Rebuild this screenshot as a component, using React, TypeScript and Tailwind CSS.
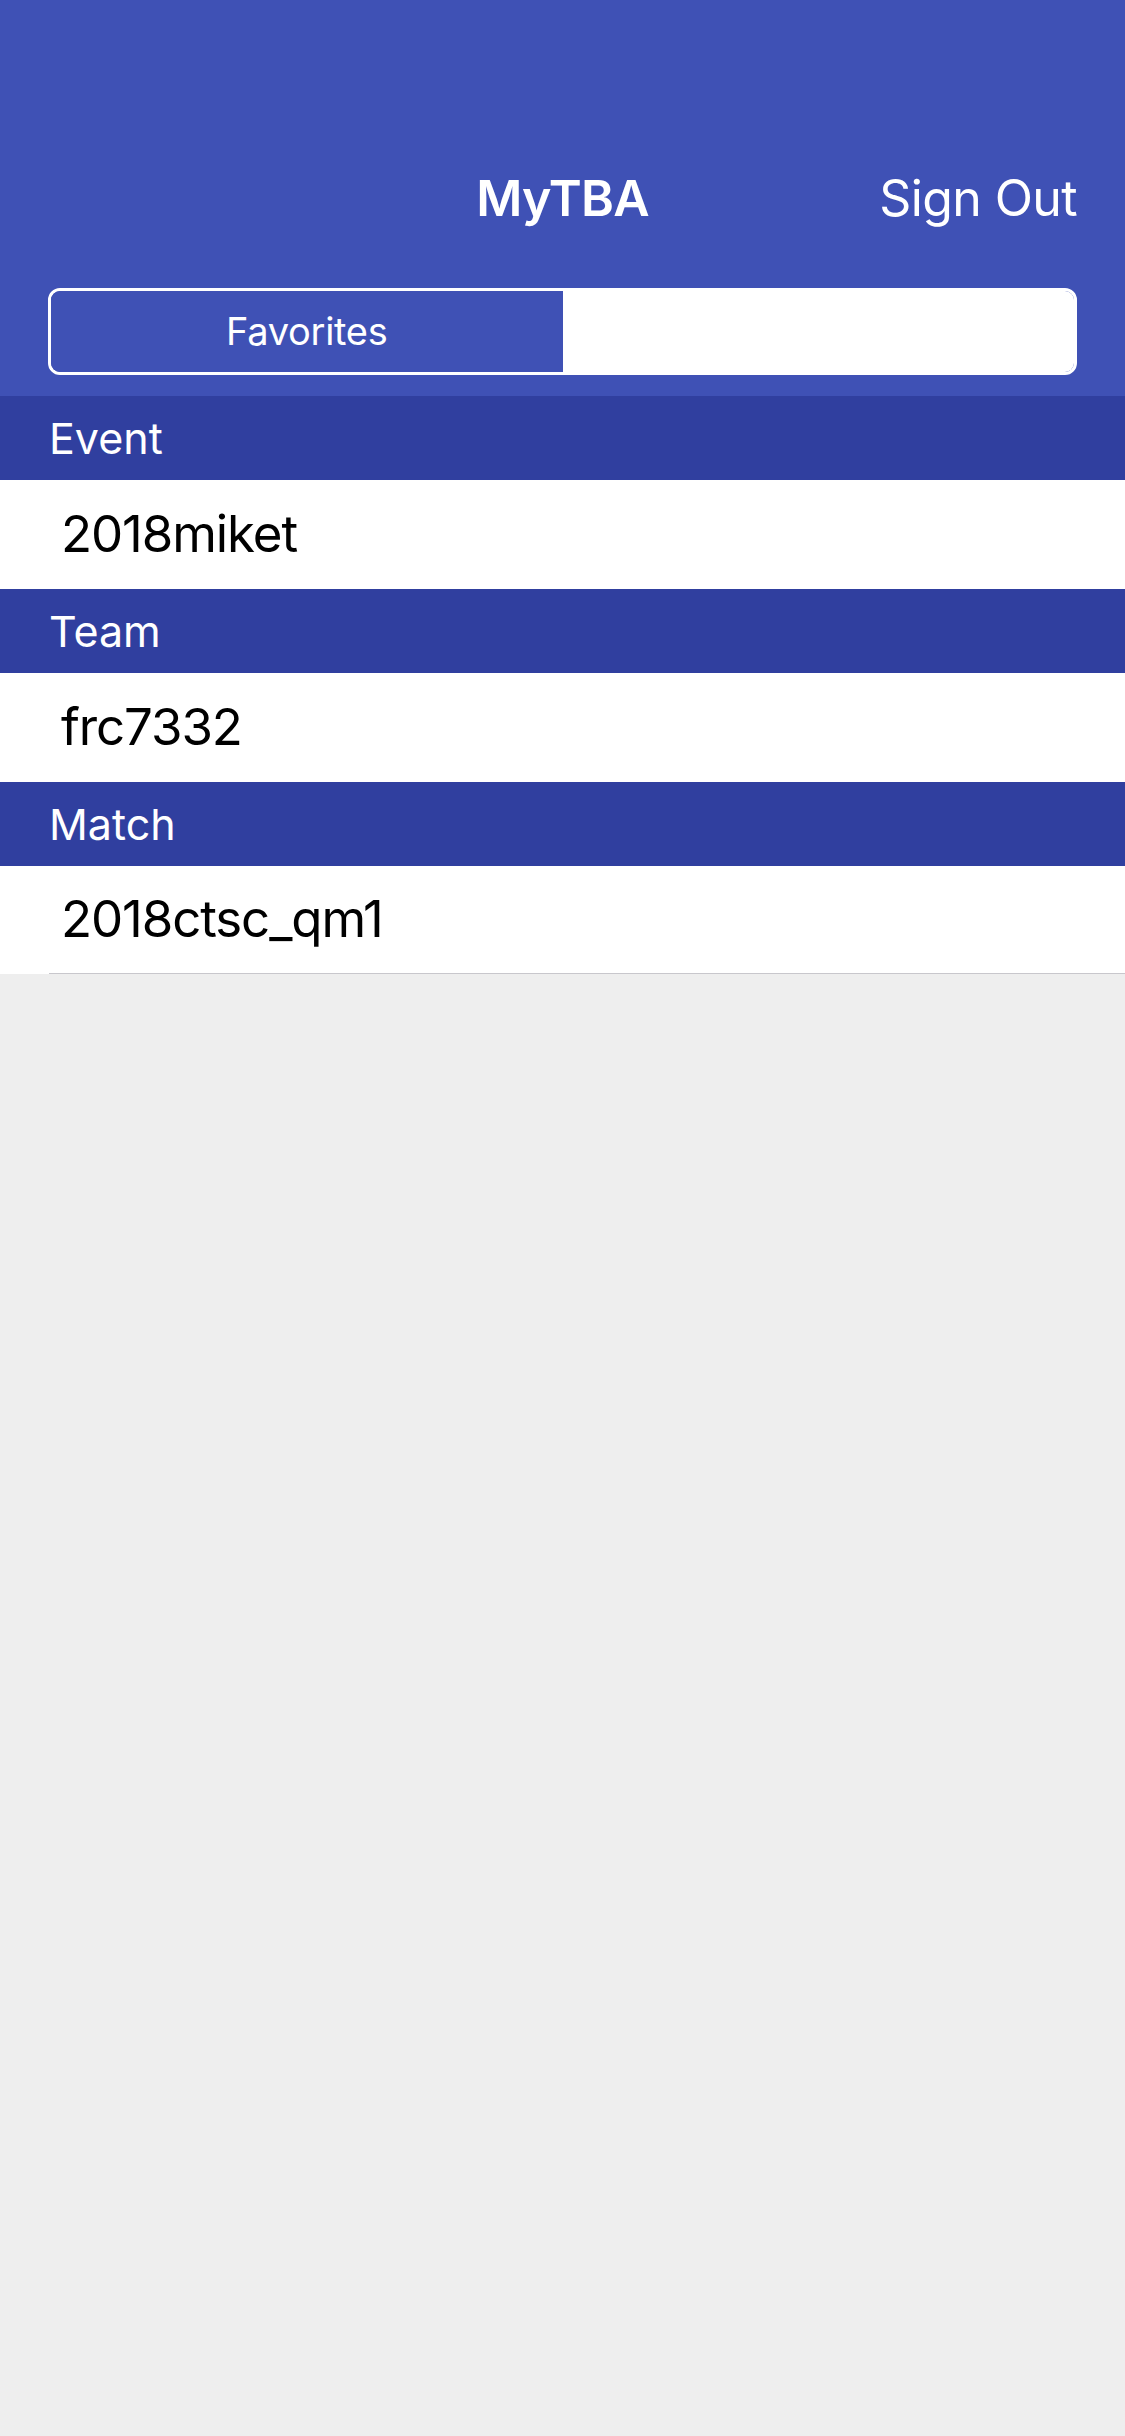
const sections = [
    {title: 'Event', items: ['2018miket']},
    {title: 'Team', items: ['frc7332']},
    {title: 'Match', items: ['2018ctsc_qm1']},
];

export default function App() {
    return (
        <div className="flex min-h-[2436px] w-[1125px] flex-col bg-[#eeeeee] font-['Inter','Liberation_Sans',sans-serif] antialiased">
            <header className="flex flex-col bg-[#3f51b5] pt-[132px]">
                <div className="relative flex h-[132px] items-center justify-center">
                    <span className="text-[50px] font-semibold tracking-[-0.8px] text-white">
                        MyTBA
                    </span>
                    <button className="absolute right-[48px] top-1/2 -translate-y-1/2 text-[50px] font-normal tracking-[-0.6px] text-white">
                        Sign Out
                    </button>
                </div>
                <div className="flex h-[132px] items-start px-[48px] pt-[24px]">
                    <div className="flex h-[87px] w-full overflow-hidden rounded-[12px] border-[3px] border-white">
                        <div className="flex flex-1 items-center justify-center bg-[#3f51b5] text-[38px] tracking-[-0.3px] text-white">
                            Favorites
                        </div>
                        <div className="flex flex-1 items-center justify-center bg-white text-[38px] text-white">
                            Subscriptions
                        </div>
                    </div>
                </div>
            </header>
            <main className="flex flex-col">
                {sections.map((section, i) => (
                    <section key={section.title} className="flex flex-col">
                        <div className="flex h-[84px] items-center bg-[#303f9f] px-[49px] text-[43px] text-white">
                            {section.title}
                        </div>
                        {section.items.map(item => (
                            <div key={item} className="bg-white">
                                <div
                                    className={
                                        i === sections.length - 1
                                            ? 'ml-[49px] flex h-[108px] items-center border-b border-[#c8c7cc] pl-[12px] text-[51px] tracking-[-1.1px] text-black'
                                            : 'ml-[49px] flex h-[109px] items-center pl-[12px] text-[51px] tracking-[-1.1px] text-black'
                                    }
                                >
                                    {item}
                                </div>
                            </div>
                        ))}
                    </section>
                ))}
            </main>
        </div>
    );
}
